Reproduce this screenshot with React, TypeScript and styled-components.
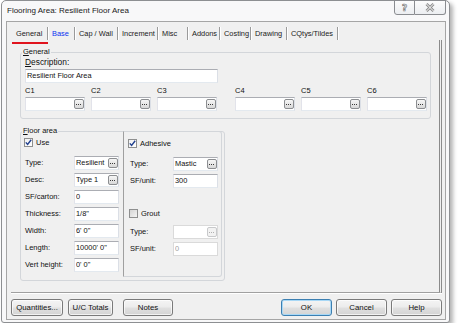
import React from 'react';
import styled, { createGlobalStyle } from 'styled-components';

const GlobalStyle = createGlobalStyle`
  html, body { margin: 0; padding: 0; background: #fff; }
  body { font-family: "Liberation Sans", Arial, sans-serif; font-size: 7.5px; color: #111; }
  * { box-sizing: border-box; }
`;

const Window = styled.div`
  margin-left: 1px;
  width: 449px;
  height: 323px;
  border: 1px solid #8d8f92;
  border-radius: 5px 5px 3px 3px;
  background: #f8f8f9;
  box-shadow: 3px 3px 4px rgba(0, 0, 0, 0.3);
  display: flex;
  flex-direction: column;
  padding: 0 3px 2px 4px;
`;

const TitleBar = styled.div`
  height: 20px;
  display: flex;
  justify-content: space-between;
  align-items: flex-start;
`;

const Title = styled.div`
  padding: 5px 0 0 1px;
  font-size: 8px;
  line-height: 10px;
  color: #1a1a1a;
  white-space: nowrap;
`;

const CaptionGroup = styled.div`
  display: flex;
  margin-top: -1px;
`;

const CaptionButton = styled.div<{ $w: number; $first?: boolean }>`
  width: ${p => p.$w}px;
  height: 15px;
  border: 1px solid #8a8c90;
  border-left-width: ${p => (p.$first ? 1 : 0)}px;
  border-radius: ${p => (p.$first ? '0 0 0 3px' : '0 0 3px 0')};
  background: linear-gradient(#fcfcfc, #eceef1);
  display: flex;
  align-items: center;
  justify-content: center;
`;

const HelpGlyph = styled.span`
  font-family: "DejaVu Sans", sans-serif;
  font-size: 9px;
  font-weight: bold;
  line-height: 10px;
  color: #fff;
  -webkit-text-stroke: 0.7px #7a7a7a;
`;

const Client = styled.div`
  flex: 1;
  border: 1px solid #a5a5a5;
  background: #f0f0f0;
  display: flex;
  flex-direction: column;
`;

const TabStrip = styled.div`
  display: flex;
  height: 13px;
  margin: 5px 0 0 5px;
`;

const Tab = styled.div<{ $w: number; $active?: boolean; $link?: boolean }>`
  position: relative;
  width: ${p => p.$w}px;
  height: 13px;
  padding-left: 4px;
  font-size: 7.4px;
  line-height: 13px;
  white-space: nowrap;
  color: ${p => (p.$link ? '#0a32f0' : '#1a1a1a')};
  border-right: 1px solid #9a9a9a;
  box-shadow: 1px 0 0 #fff;
  &::after {
    content: '';
    display: ${p => (p.$active ? 'block' : 'none')};
    position: absolute;
    left: 0;
    right: -1px;
    bottom: -4px;
    height: 2px;
    background: #e0141e;
  }
`;

const TabPanel = styled.div`
  margin: 0 3px 0 4px;
  padding: 7px 8px 11px 9px;
  border-right: 3px double #8b8b8b;
  border-bottom: 1px solid #a0a0a0;
  box-shadow: 0 1px 0 #fff;
  display: flex;
  flex-direction: column;
  align-items: flex-start;
  gap: 7px;
`;

const GroupBox = styled.fieldset<{ $w?: number; $pr: number; $pb: number }>`
  margin: 0;
  min-width: 0;
  width: ${p => (p.$w ? `${p.$w}px` : '100%')};
  border: 1px solid #d3d6da;
  border-radius: 3px;
  padding: 0 ${p => p.$pr}px ${p => p.$pb}px 4px;
`;

const Legend = styled.legend`
  padding: 0 1px;
  margin-left: -3px;
  font-size: 7.5px;
  line-height: 10px;
`;

const Label = styled.div<{ $size?: number }>`
  font-size: ${p => p.$size ?? 7.5}px;
  line-height: 10px;
  white-space: nowrap;
`;

const TextBox = styled.div<{ $w: number; $mt?: number; $disabled?: boolean }>`
  width: ${p => p.$w}px;
  height: 14px;
  margin-top: ${p => p.$mt ?? 0}px;
  background: #fff;
  border: 1px solid;
  border-color: ${p => (p.$disabled ? '#dadada' : '#abadb3 #dbdfe6 #e3e9ef #e2e3ea')};
  display: flex;
  align-items: center;
  padding-left: 1px;
  font-size: 7.4px;
  color: ${p => (p.$disabled ? '#a0a0a0' : '#111')};
`;

const Value = styled.span`
  flex: 1;
  min-width: 0;
  line-height: 12px;
  white-space: nowrap;
  overflow: hidden;
`;

const EllipsisButton = styled.span<{ $disabled?: boolean }>`
  width: 10px;
  height: 10px;
  flex: none;
  border: 1px solid ${p => (p.$disabled ? '#c8c9cb' : '#8c8e91')};
  border-radius: 2px;
  background: ${p => (p.$disabled ? '#f2f2f2' : 'linear-gradient(#f6f6f6, #d8d8d8)')};
  display: flex;
  align-items: center;
  justify-content: center;
`;

const CRow = styled.div`
  display: flex;
  justify-content: space-between;
  margin-top: 3px;
`;

const CGroup = styled.div`
  display: flex;
  gap: 6px;
`;

const CField = styled.div`
  display: flex;
  flex-direction: column;
  gap: 1px;
  width: 60px;
`;

const FloorBody = styled.div`
  display: flex;
`;

const LeftCol = styled.div`
  width: 98px;
  display: flex;
  flex-direction: column;
`;

const RightCol = styled.div`
  width: 99px;
  margin: -5px 0 -5px 0;
  padding: 5px 3px 0 6px;
  border: 1px solid #d3d6da;
  border-left-color: #9f9f9f;
  border-radius: 0 3px 3px 0;
  display: flex;
  flex-direction: column;
`;

const CheckRow = styled.div<{ $ml: number; $mt?: number }>`
  height: 13px;
  margin-left: ${p => p.$ml}px;
  margin-top: ${p => p.$mt ?? 0}px;
  display: flex;
  align-items: center;
  gap: 3px;
`;

const CheckBox = styled.span<{ $checked?: boolean }>`
  width: 9px;
  height: 9px;
  border: 1px solid #8e8f8f;
  background: ${p => (p.$checked ? 'linear-gradient(135deg, #f0f0f0, #ffffff)' : 'linear-gradient(135deg, #d4d4d4, #f4f4f4)')};
  display: flex;
  align-items: center;
  justify-content: center;
`;

const FieldGrid = styled.div<{ $label: number; $mt: number }>`
  display: grid;
  grid-template-columns: ${p => p.$label}px 45px;
  grid-auto-rows: 14px;
  row-gap: 3px;
  align-items: center;
  margin-top: ${p => p.$mt}px;
`;

const ButtonRow = styled.div`
  margin: 6px 3px 0 4px;
  display: flex;
  justify-content: space-between;
`;

const ButtonGroup = styled.div<{ $gap: number }>`
  display: flex;
  gap: ${p => p.$gap}px;
`;

const Button = styled.button<{ $w: number; $ml?: number; $default?: boolean }>`
  width: ${p => p.$w}px;
  height: 17px;
  margin-left: ${p => p.$ml ?? 0}px;
  padding: 0;
  font-family: "Liberation Sans", Arial, sans-serif;
  font-size: 7.8px;
  color: #111;
  border: 1px solid ${p => (p.$default ? '#3c7fb1' : '#7a7a7a')};
  border-radius: 3px;
  background: linear-gradient(#f4f4f4 0%, #ececec 48%, #e0e0e0 52%, #d4d4d4 100%);
  box-shadow: inset 0 0 0 1px ${p => (p.$default ? '#a8d8f6' : 'rgba(255,255,255,0.7)')};
`;

const Dots: React.FC<{ disabled?: boolean }> = ({ disabled }) => (
  <svg width="6" height="1" viewBox="0 0 6 1">
    {[0, 2, 4].map(x => (
      <rect key={x} x={x} y={0} width={1} height={1} fill={disabled ? '#b0b0b0' : '#3a3a3a'} />
    ))}
  </svg>
);

const CheckMark = () => (
  <svg width="7" height="7" viewBox="0 0 7 7">
    <path d="M0.8 3.4 L2.6 5.5 L6.2 0.8" fill="none" stroke="#21408f" strokeWidth="1.4" />
  </svg>
);

const CloseGlyph = () => (
  <svg width="10" height="9" viewBox="0 0 10 9">
    <path d="M1.5 1 L8.5 8 M8.5 1 L1.5 8" stroke="#8a8a8a" strokeWidth="2.8" />
    <path d="M1.5 1 L8.5 8 M8.5 1 L1.5 8" stroke="#ffffff" strokeWidth="1" />
  </svg>
);

type FieldProps = { w: number; value?: string; ellipsis?: boolean; disabled?: boolean; mt?: number };
const Field: React.FC<FieldProps> = ({ w, value = '', ellipsis, disabled, mt }) => (
  <TextBox $w={w} $mt={mt} $disabled={disabled}>
    <Value>{value}</Value>
    {ellipsis && (
      <EllipsisButton $disabled={disabled}>
        <Dots disabled={disabled} />
      </EllipsisButton>
    )}
  </TextBox>
);

const tabs = [
  { label: 'General', w: 36, active: true },
  { label: 'Base', w: 27, link: true },
  { label: 'Cap / Wall', w: 43 },
  { label: 'Increment', w: 40 },
  { label: 'Misc', w: 30 },
  { label: 'Addons', w: 32 },
  { label: 'Costing', w: 31 },
  { label: 'Drawing', w: 36 },
  { label: 'CQtys/Tildes', w: 51 },
];

const floorFields = [
  { label: 'Type:', value: 'Resilient', ellipsis: true },
  { label: 'Desc:', value: 'Type 1', ellipsis: true },
  { label: 'SF/carton:', value: '0' },
  { label: 'Thickness:', value: '1/8"' },
  { label: 'Width:', value: `6' 0"` },
  { label: 'Length:', value: `10000' 0"` },
  { label: 'Vert height:', value: `0' 0"` },
];

const cGroups = [
  ['C1', 'C2', 'C3'],
  ['C4', 'C5', 'C6'],
];

export default function App() {
  return (
    <>
      <GlobalStyle />
      <Window>
        <TitleBar>
          <Title>Flooring Area: Resilient Floor Area</Title>
          <CaptionGroup>
            <CaptionButton $w={21} $first>
              <HelpGlyph>?</HelpGlyph>
            </CaptionButton>
            <CaptionButton $w={31}>
              <CloseGlyph />
            </CaptionButton>
          </CaptionGroup>
        </TitleBar>
        <Client>
          <TabStrip>
            {tabs.map(t => (
              <Tab key={t.label} $w={t.w} $active={t.active} $link={t.link}>
                {t.label}
              </Tab>
            ))}
          </TabStrip>
          <TabPanel>
            <GroupBox $pr={3} $pb={7}>
              <Legend>
                <u>G</u>eneral
              </Legend>
              <Label $size={8.4}>
                <u>D</u>escription:
              </Label>
              <Field w={193} value="Resilient Floor Area" mt={2} />
              <CRow>
                {cGroups.map((g, i) => (
                  <CGroup key={i}>
                    {g.map(c => (
                      <CField key={c}>
                        <Label>{c}</Label>
                        <Field w={60} ellipsis />
                      </CField>
                    ))}
                  </CGroup>
                ))}
              </CRow>
            </GroupBox>
            <GroupBox $w={205} $pr={2} $pb={8}>
              <Legend>
                <u>F</u>loor area
              </Legend>
              <FloorBody>
                <LeftCol>
                  <CheckRow $ml={-1}>
                    <CheckBox $checked>
                      <CheckMark />
                    </CheckBox>
                    <span>Use</span>
                  </CheckRow>
                  <FieldGrid $label={49} $mt={7}>
                    {floorFields.map(f => (
                      <React.Fragment key={f.label}>
                        <Label>{f.label}</Label>
                        <Field w={45} value={f.value} ellipsis={f.ellipsis} />
                      </React.Fragment>
                    ))}
                  </FieldGrid>
                </LeftCol>
                <RightCol>
                  <CheckRow $ml={-2}>
                    <CheckBox $checked>
                      <CheckMark />
                    </CheckBox>
                    <span>Adhesive</span>
                  </CheckRow>
                  <FieldGrid $label={43} $mt={7}>
                    <Label>Type:</Label>
                    <Field w={45} value="Mastic" ellipsis />
                    <Label>SF/unit:</Label>
                    <Field w={45} value="300" />
                  </FieldGrid>
                  <CheckRow $ml={-1} $mt={19}>
                    <CheckBox />
                    <span>Grout</span>
                  </CheckRow>
                  <FieldGrid $label={43} $mt={5}>
                    <Label>Type:</Label>
                    <Field w={45} ellipsis disabled />
                    <Label>SF/unit:</Label>
                    <Field w={45} value="0" disabled />
                  </FieldGrid>
                </RightCol>
              </FloorBody>
            </GroupBox>
          </TabPanel>
          <ButtonRow>
            <ButtonGroup $gap={5}>
              <Button $w={52}>Quantities...</Button>
              <Button $w={45}>U/C Totals</Button>
              <Button $w={50} $ml={5}>Notes</Button>
            </ButtonGroup>
            <ButtonGroup $gap={4}>
              <Button $w={51} $default>OK</Button>
              <Button $w={51}>Cancel</Button>
              <Button $w={51}>Help</Button>
            </ButtonGroup>
          </ButtonRow>
        </Client>
      </Window>
    </>
  );
}
